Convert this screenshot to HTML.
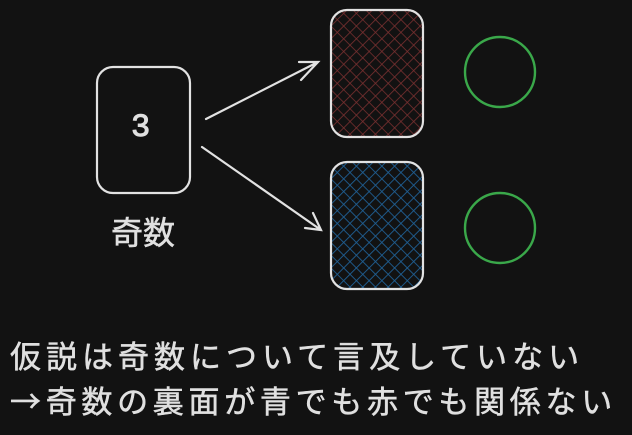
<!DOCTYPE html>
<html><head><meta charset="utf-8"><style>
html,body{margin:0;padding:0;background:#121212;width:632px;height:435px;overflow:hidden}
.t{position:absolute;color:#e0e0e0;font-family:"Noto Sans CJK JP",sans-serif;white-space:nowrap;-webkit-text-stroke:0.5px #e0e0e0}
</style></head><body>
<svg width="632" height="435" style="position:absolute;left:0;top:0">
<defs>
<pattern id="hr" width="9" height="9" patternUnits="userSpaceOnUse" patternTransform="rotate(45)">
<path d="M0 0V9M0 0H9" stroke="#7a3030" stroke-width="1.6"/></pattern>
<pattern id="hb" width="9" height="9" patternUnits="userSpaceOnUse" patternTransform="rotate(45)">
<path d="M0 0V9M0 0H9" stroke="#1f5f94" stroke-width="1.8"/></pattern>
</defs>
<g fill="none" stroke="#e2e2e2" stroke-width="2.2" stroke-linecap="round">
<rect x="97" y="67" width="93" height="126" rx="16"/>
<rect x="331" y="10" width="92" height="127" rx="16" fill="url(#hr)"/>
<rect x="331" y="162" width="92" height="127" rx="16" fill="url(#hb)"/>
<path d="M206 119L318 62M299 62L318 62L301 80"/>
<path d="M202 147L321 230M305 228L321 230L313 213"/>
</g>
<g fill="none" stroke="#3aa84a" stroke-width="2.4">
<circle cx="500" cy="72" r="35"/>
<circle cx="500" cy="228" r="35"/>
</g>
</svg>
<div class="t" style="left:131px;top:109px;font-size:32px;font-family:'Liberation Mono',monospace;-webkit-text-stroke:1px #e0e0e0">3</div>
<div class="t" style="left:111px;top:208px;font-size:32px">奇数</div>
<div class="t" style="left:10px;top:332px;font-size:31px;letter-spacing:5px">仮説は奇数について言及していない</div>
<div class="t" style="left:10px;top:377px;font-size:31px;letter-spacing:4.7px">→奇数の裏面が青でも赤でも関係ない</div>
</body></html>
